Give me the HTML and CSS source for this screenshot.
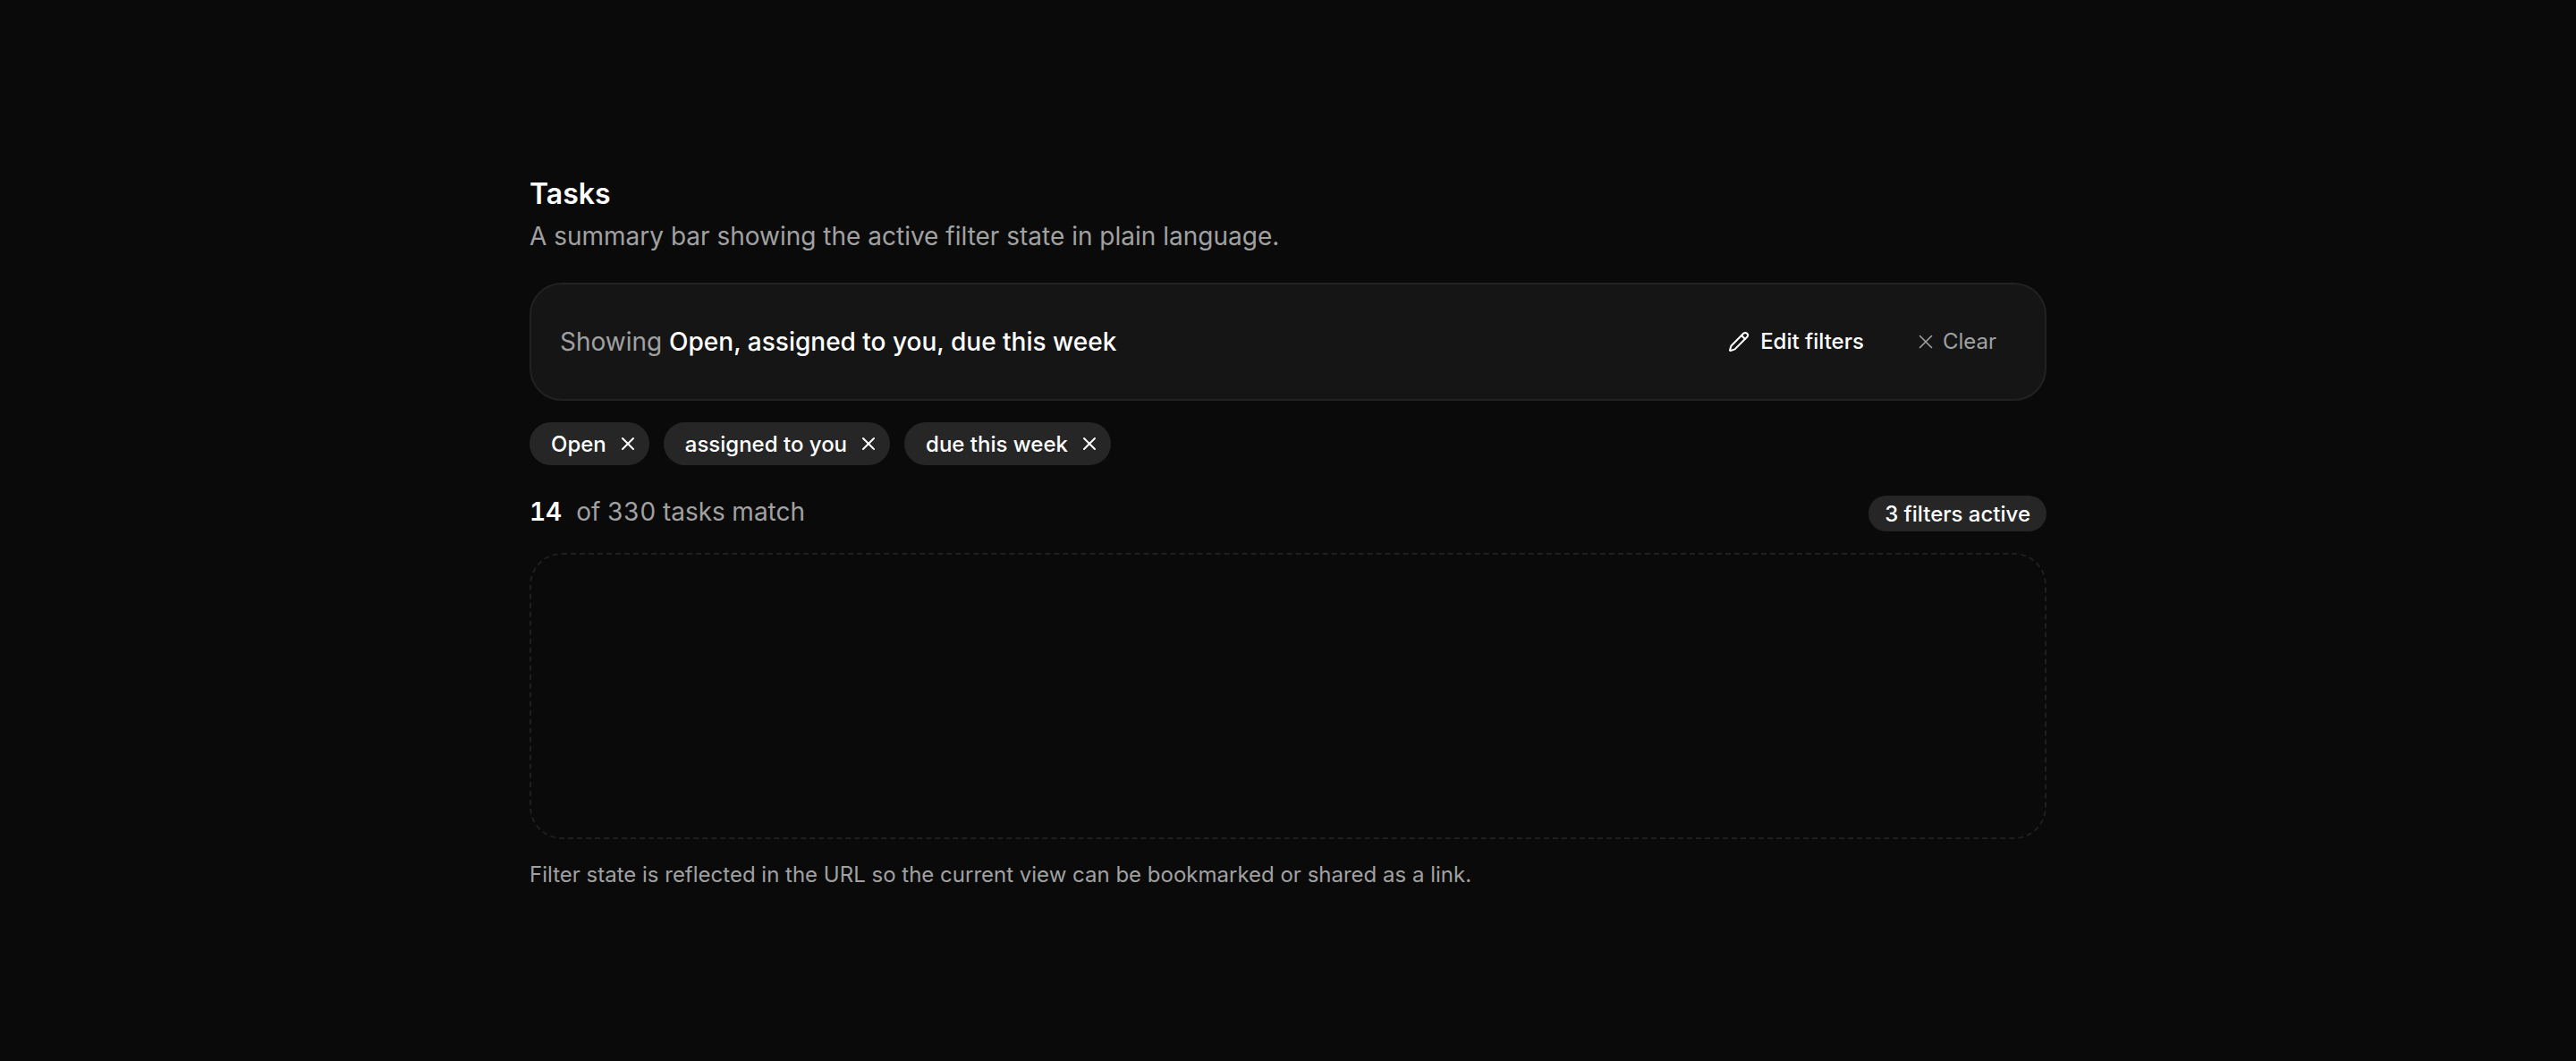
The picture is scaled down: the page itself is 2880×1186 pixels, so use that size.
FILE: index.html
```html
<!DOCTYPE html>
<html lang="en">
<head>
<meta charset="utf-8">
<title>Tasks</title>
<link rel="stylesheet" href="styles.css">
</head>
<body>
<main class="page">
  <header class="head">
    <h1 class="title">Tasks</h1>
    <p class="subtitle">A summary bar showing the active filter state in plain language.</p>
  </header>
  <section class="bar">
    <p class="summary"><span class="muted">Showing</span> <strong class="strong">Open, assigned to you, due this week</strong></p>
    <div class="actions">
      <button class="btn btn-edit">
        <svg class="icon-edit" viewBox="0 0 24 24" fill="none" stroke="currentColor" stroke-width="2" stroke-linecap="round" stroke-linejoin="round"><path d="M21.174 6.812a1 1 0 0 0-3.986-3.987L3.842 16.174a2 2 0 0 0-.5.83l-1.321 4.352a.5.5 0 0 0 .623.622l4.353-1.32a2 2 0 0 0 .83-.497z"/><path d="m15 5 4 4"/></svg>
        Edit filters
      </button>
      <button class="btn btn-clear">
        <svg class="icon-x" viewBox="0 0 24 24" fill="none" stroke="currentColor" stroke-width="2" stroke-linecap="round" stroke-linejoin="round"><path d="M18 6 6 18"/><path d="m6 6 12 12"/></svg>
        Clear
      </button>
    </div>
  </section>
  <ul class="chips">
    <li class="chip">Open <svg class="icon-chip" viewBox="0 0 24 24" fill="none" stroke="currentColor" stroke-width="2" stroke-linecap="round" stroke-linejoin="round"><path d="M18 6 6 18"/><path d="m6 6 12 12"/></svg></li>
    <li class="chip">assigned to you <svg class="icon-chip" viewBox="0 0 24 24" fill="none" stroke="currentColor" stroke-width="2" stroke-linecap="round" stroke-linejoin="round"><path d="M18 6 6 18"/><path d="m6 6 12 12"/></svg></li>
    <li class="chip">due this week <svg class="icon-chip" viewBox="0 0 24 24" fill="none" stroke="currentColor" stroke-width="2" stroke-linecap="round" stroke-linejoin="round"><path d="M18 6 6 18"/><path d="m6 6 12 12"/></svg></li>
  </ul>
  <div class="count-row">
    <p class="count"><strong class="count-num">14</strong><span class="muted">of 330 tasks match</span></p>
    <span class="badge">3 filters active</span>
  </div>
  <div class="placeholder"></div>
  <p class="note">Filter state is reflected in the URL so the current view can be bookmarked or shared as a link.</p>
</main>
</body>
</html>
```

FILE: styles.css
```css
* { box-sizing: border-box; }
html, body { margin: 0; height: 100%; }
body {
  background: #0a0a0a;
  color: #fff;
  font-family: Inter, "Liberation Sans", sans-serif;
}
.page {
  width: 1696px;
  margin: 0 auto;
  padding-top: 193px;
}
.head { display: flex; flex-direction: column; gap: 3px; }
.title { margin: 0; font-size: 32px; line-height: 48px; font-weight: 600; }
.subtitle { margin: 0; font-size: 28px; line-height: 40px; color: #a1a1a1; }
.bar {
  margin-top: 32px;
  height: 132px;
  display: flex;
  align-items: center;
  justify-content: space-between;
  padding: 0 32px;
  background: #151515;
  border: 2px solid #222;
  border-radius: 36px;
}
.summary { margin: 0; font-size: 28px; line-height: 40px; }
.muted { color: #a1a1a1; }
.strong { font-weight: 500; }
.actions { display: flex; align-items: center; gap: 8px; }
.btn {
  display: flex;
  align-items: center;
  height: 64px;
  background: none;
  border: 0;
  font: 500 24px/32px Inter, sans-serif;
}
.btn-edit { gap: 12px; padding: 0 24px; color: #fff; }
.btn-clear { gap: 6px; padding: 0 22px 0 24px; color: #a1a1a1; font-weight: 400; }
.icon-edit { width: 24px; height: 24px; }
.icon-x { width: 26px; height: 26px; stroke-width: 1.5; }
.chips { list-style: none; margin: 24px 0 0; padding: 0; display: flex; gap: 16px; }
.chip {
  display: flex;
  align-items: center;
  gap: 12px;
  height: 48px;
  padding: 0 12px 0 24px;
  border-radius: 24px;
  background: #262626;
  font-size: 24px;
  font-weight: 500;
}
.icon-chip { width: 24px; height: 24px; }
.count-row { margin-top: 32px; height: 42px; display: flex; align-items: flex-start; justify-content: space-between; }
.count {
  margin: 0;
  display: flex;
  align-items: baseline;
  gap: 16px;
  font-size: 28px;
  line-height: 40px;
  font-variant-numeric: tabular-nums;
}
.count-num { font-weight: 600; }
.badge {
  align-self: flex-end;
  height: 40px;
  display: flex;
  align-items: center;
  padding: 0 18px;
  border-radius: 20px;
  background: #262626;
  font-size: 24px;
  font-weight: 500;
}
.placeholder {
  margin-top: 24px;
  height: 320px;
  border: 2px dashed #1f1f1f;
  border-radius: 36px;
}
.note { margin: 24px 0 0; font-size: 24px; line-height: 32px; color: #a1a1a1; }
```
